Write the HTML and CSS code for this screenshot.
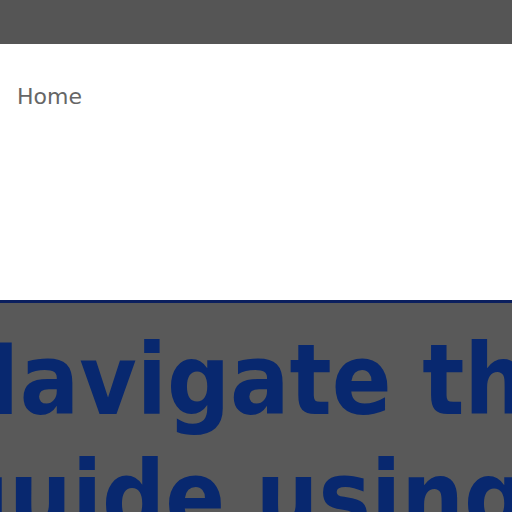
FILE: index.html
```html
<!DOCTYPE html>
<html lang="en">
<head>
<meta charset="utf-8">
<title>Guide</title>
<link rel="stylesheet" href="styles.css">
</head>
<body>
<header class="topbar"></header>
<nav class="panel">
  <a class="home" href="#">Home</a>
</nav>
<section class="hero">
  <h1 class="title">Navigate the guide using the menu</h1>
</section>
</body>
</html>
```
FILE: styles.css
```css
html, body {
  margin: 0;
  padding: 0;
  background: #595959;
  overflow: hidden;
}
.topbar {
  height: 44px;
  background: #555555;
}
.panel {
  height: 215px;
  padding: 41px 17px 0;
  background: #ffffff;
  border-bottom: 3px solid #0b1f5e;
}
.home {
  display: inline-block;
  font-family: "DejaVu Sans", sans-serif;
  font-size: 22px;
  line-height: 24px;
  color: #666666;
  text-decoration: none;
}
.hero {
  height: 209px;
  overflow: hidden;
  background: #595959;
  padding-top: 19px;
}
.title {
  margin: 0 0 0 -54px;
  width: 900px;
  font-family: "DejaVu Sans Condensed", "DejaVu Sans", sans-serif;
  font-stretch: condensed;
  font-weight: bold;
  font-size: 98px;
  line-height: 117px;
  color: #08286f;
}
```
